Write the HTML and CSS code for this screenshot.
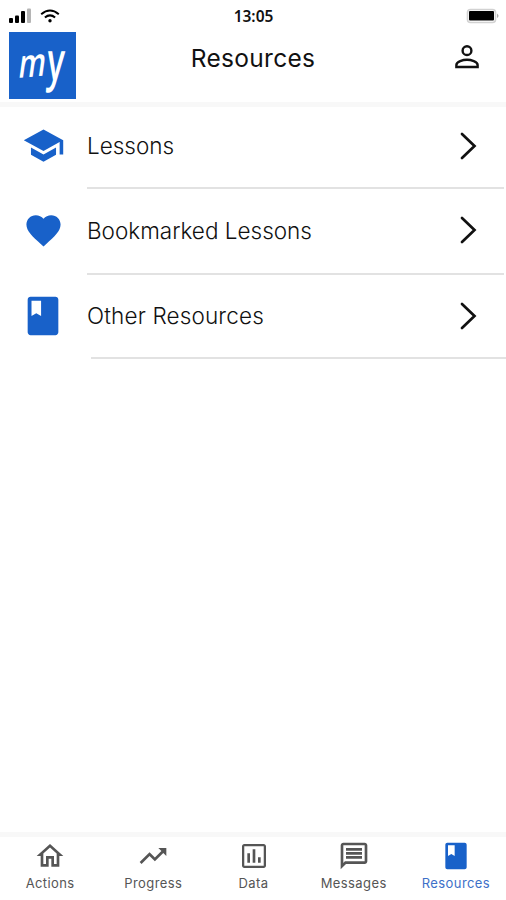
FILE: index.html
```html
<!DOCTYPE html>
<html lang="en">
<head>
  <meta charset="utf-8">
  <title>Resources</title>
  <link rel="stylesheet" href="styles.css">
</head>
<body>
  <div class="app">
    <div class="status-bar">
      <div class="signal">
        <svg width="24" height="16" viewBox="0 0 24 16">
          <rect x="0" y="10" width="4" height="5" rx="1"/>
          <rect x="6" y="7.5" width="4" height="7.5" rx="1"/>
          <rect x="12" y="3" width="4" height="12" rx="1"/>
          <rect x="18" y="0.5" width="4" height="14.5" rx="1" fill="#b5b5b5"/>
        </svg>
        <svg width="20" height="16" viewBox="0 0 20 16" fill="none" stroke="#000" stroke-width="2">
          <path d="M1.2 6.2Q10 -1.2 18.8 6.2"/>
          <path d="M4.9 9.6Q10 5.2 15.1 9.6"/>
          <circle cx="10" cy="12.7" r="1.7" fill="#000" stroke="none"/>
        </svg>
      </div>
      <div class="time">13:05</div>
      <svg class="battery" width="34" height="16" viewBox="0 0 34 16">
        <rect x="1.5" y="1.5" width="28" height="13" rx="3" fill="#fff" stroke="#d2d2d2" stroke-width="1.6"/>
        <rect x="3" y="3" width="25" height="9.5" rx="1"/>
        <path d="M31.3 5.5q2.2 2.3 0 4.6z" fill="#888"/>
      </svg>
    </div>

    <header class="header">
      <div class="logo"><span class="logo-m">m</span><span class="logo-y">y</span></div>
      <h1>Resources</h1>
      <svg class="profile" width="34" height="34" viewBox="0 0 24 24" fill="none" stroke="#111" stroke-width="1.7">
        <circle cx="12" cy="7.5" r="3.1"/>
        <path d="M4.5 19.1V17.6C4.5 15.2 9.2 13.9 12 13.9S19.5 15.2 19.5 17.6V19.1Z"/>
      </svg>
    </header>

    <main class="list">
      <div class="row">
        <div class="row-icon">
          <svg width="43" height="43" viewBox="0 0 24 24"><path d="M5 13.18v4L12 21l7-3.82v-4L12 17l-7-3.82zM12 3L1 9l11 6 9-4.91V17h2V9L12 3z"/></svg>
        </div>
        <div class="row-body">
          <span>Lessons</span>
          <svg class="chevron" width="18" height="28" viewBox="0 0 18 28"><path d="M2 2L14.5 14L2 26"/></svg>
        </div>
      </div>
      <div class="row middle">
        <div class="row-icon">
          <svg width="41" height="41" viewBox="0 0 24 24"><path d="M12 21.35l-1.45-1.32C5.4 15.36 2 12.28 2 8.5 2 5.42 4.42 3 7.5 3c1.74 0 3.41.81 4.5 2.09C13.09 3.81 14.76 3 16.5 3 19.58 3 22 5.42 22 8.5c0 3.78-3.4 6.86-8.55 11.54L12 21.35z"/></svg>
        </div>
        <div class="row-body">
          <span>Bookmarked Lessons</span>
          <svg class="chevron" width="18" height="28" viewBox="0 0 18 28"><path d="M2 2L14.5 14L2 26"/></svg>
        </div>
      </div>
      <div class="row last">
        <div class="row-icon">
          <svg width="46" height="46" viewBox="0 0 24 24"><path d="M18.5 2H5.5c-.8 0-1.5.7-1.5 1.5v17c0 .8.7 1.5 1.5 1.5h13c.8 0 1.5-.7 1.5-1.5v-17c0-.8-.7-1.5-1.5-1.5zM6 4h5v8l-2.5-1.5L6 12V4z"/></svg>
        </div>
        <div class="row-body">
          <span>Other Resources</span>
          <svg class="chevron" width="18" height="28" viewBox="0 0 18 28"><path d="M2 2L14.5 14L2 26"/></svg>
        </div>
      </div>
    </main>

    <nav class="tabs">
      <a class="tab">
        <svg width="32" height="32" viewBox="0 0 24 24"><path d="M12 5.69l5 4.5V18h-2v-6H9v6H7v-7.81l5-4.5M12 3L2 12h3v8h6v-6h2v6h6v-8h3L12 3z"/></svg>
        <span>Actions</span>
      </a>
      <a class="tab progress">
        <svg width="34" height="32" viewBox="0 0 24 24"><path d="M16 6l2.29 2.29-4.88 4.88-4-4L2 16.59 3.41 18l6-6 4 4 6.3-6.29L22 12V6z"/></svg>
        <span>Progress</span>
      </a>
      <a class="tab">
        <svg width="32" height="32" viewBox="0 0 24 24"><path d="M9 17H7v-7h2v7zm4 0h-2V7h2v10zm4 0h-2v-4h2v4zm2.3 2.3H4.7V4.7h14.6v14.6zm0-16.3H4.7C3.8 3 3 3.8 3 4.7v14.6c0 .9.8 1.7 1.7 1.7h14.6c.9 0 1.7-.8 1.7-1.7V4.7c0-.9-.8-1.7-1.7-1.7z"/></svg>
        <span>Data</span>
      </a>
      <a class="tab messages">
        <svg width="32" height="32" viewBox="0 0 24 24"><path d="M4 4h16v12H5.17L4 17.17V4m0-2c-1.1 0-1.99.9-1.99 2L2 22l4-4h14c1.1 0 2-.9 2-2V4c0-1.1-.9-2-2-2H4zm2 10h12v2H6v-2zm0-3h12v2H6V9zm0-3h12v2H6V6z"/></svg>
        <span>Messages</span>
      </a>
      <a class="tab active">
        <svg width="32" height="32" viewBox="0 0 24 24"><path d="M18.5 2H5.5c-.8 0-1.5.7-1.5 1.5v17c0 .8.7 1.5 1.5 1.5h13c.8 0 1.5-.7 1.5-1.5v-17c0-.8-.7-1.5-1.5-1.5zM6 4h5v8l-2.5-1.5L6 12V4z"/></svg>
        <span>Resources</span>
      </a>
    </nav>
  </div>
</body>
</html>
```
FILE: styles.css
```css
* {
  box-sizing: border-box;
}

body {
  margin: 0;
  background: #fff;
  font-family: Inter, "Liberation Sans", sans-serif;
  color: #111;
}

svg {
  display: block;
  flex-shrink: 0;
}

.app {
  display: flex;
  flex-direction: column;
  width: 506px;
  height: 900px;
  overflow: hidden;
}

.status-bar {
  display: grid;
  grid-template-columns: 1fr auto 1fr;
  align-items: center;
  height: 32px;
  padding: 0 6px 0 9px;
}

.signal {
  display: flex;
  gap: 7px;
}

.time {
  padding-right: 2px;
  font-family: "Noto Sans", sans-serif;
  font-size: 15.5px;
  font-weight: 600;
}

.battery {
  justify-self: end;
}

.header {
  display: grid;
  grid-template-columns: 67px 1fr 67px;
  height: 75px;
  padding: 0 9px;
  border-bottom: 5px solid #f8f8f8;
}

.logo {
  display: flex;
  align-items: center;
  justify-content: center;
  width: 67px;
  height: 67px;
  background: #1861c9;
  color: #fff;
  font-family: "Open Sans", sans-serif;
  font-size: 38px;
  line-height: 38px;
  font-weight: 600;
}

.logo-m {
  transform: translate(1px, -5px) skew(-8deg, -5deg) scale(0.75, 1.05);
}

.logo-y {
  transform: translate(-4px, -7px) skewX(-4deg) scale(0.85, 1.4);
}

.header h1 {
  margin: 11px 0 0;
  font-size: 24.5px;
  line-height: 30px;
  font-weight: 400;
  letter-spacing: 0.3px;
  text-align: center;
}

.profile {
  margin: 8px 0 0 20px;
}

.list {
  flex: 1;
}

.row {
  display: flex;
  height: 82px;
  padding-right: 2px;
}

.middle {
  height: 86px;
}

.last {
  height: 84px;
  padding-right: 0;
}

.row-icon {
  display: flex;
  align-items: center;
  justify-content: center;
  width: 87px;
  height: 76px;
  padding-right: 1px;
  fill: #1861c9;
}

.middle .row-icon {
  height: 82px;
}

.last .row-icon {
  height: 81px;
}

.row-body {
  display: flex;
  flex: 1;
  align-items: center;
  justify-content: space-between;
  padding: 0 26px 3px 0;
  border-bottom: 2px solid #e2e2e2;
  font-size: 22.5px;
  font-weight: 300;
}

.middle .row-body {
  padding-bottom: 2px;
}

.last .row-body {
  margin-left: 4px;
  padding: 0 28px 1px 0;
}

.last .row-body span {
  margin-left: -4px;
  letter-spacing: 0.15px;
}

.chevron {
  fill: none;
  stroke: #111;
  stroke-width: 2.7;
  stroke-linecap: round;
}

.tabs {
  display: flex;
  height: 68px;
  padding-top: 3px;
  border-top: 5px solid #f8f8f8;
}

.tab {
  display: flex;
  flex: 1;
  flex-direction: column;
  align-items: center;
  gap: 3px;
  color: #555;
  font-size: 13px;
  line-height: 16px;
  font-weight: 400;
  letter-spacing: 0.4px;
}

.progress {
  padding-left: 3px;
}

.messages {
  padding-right: 2px;
}

.tab svg {
  fill: #555;
}

.active {
  color: #3d70c8;
}

.active svg {
  fill: #1861c9;
}
```
